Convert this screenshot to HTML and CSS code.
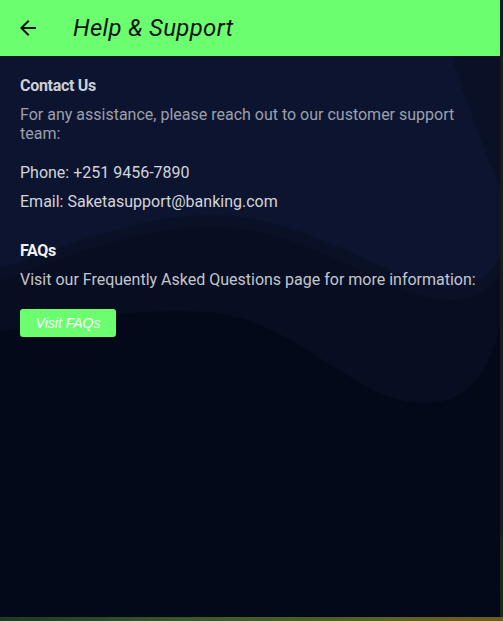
FILE: index.html
```html
<!DOCTYPE html>
<html lang="en">
<head>
<meta charset="utf-8">
<title>Help &amp; Support</title>
<link rel="stylesheet" href="styles.css">
</head>
<body>
<div class="frame">
  <div class="app">
    <header class="appbar">
      <button class="back" aria-label="Back">
        <svg width="24" height="24" viewBox="0 0 24 24"><path d="M20 11H7.83l5.59-5.59L12 4l-8 8 8 8 1.41-1.41L7.83 13H20v-2z" fill="#111"/></svg>
      </button>
      <h1 class="title">Help &amp; Support</h1>
    </header>
    <main class="body">
      <svg class="waves" viewBox="0 0 500 561" preserveAspectRatio="none" aria-hidden="true">
        <rect width="500" height="561" fill="#030918"/>
        <path d="M0,0 H500 V268 C490,320 462,352 415,347 C345,338 295,262 205,256 C120,252 60,266 0,276 Z" fill="#070e22"/>
        <path d="M0,0 H500 V214 C485,250 445,250 405,234 C345,210 300,180 235,172 C150,165 70,200 0,225 Z" fill="#0a1127"/>
        <path d="M0,0 H452 C466,45 484,95 500,132 V200 C482,236 445,236 405,220 C345,196 300,168 235,160 C150,152 70,190 0,212 Z" fill="#0d1430"/>
      </svg>
      <section class="block">
        <h2 class="heading">Contact Us</h2>
        <p class="muted">For any assistance, please reach out to our customer support team:</p>
        <p class="info spaced">Phone: +251 9456-7890</p>
        <p class="info">Email: Saketasupport@banking.com</p>
      </section>
      <section class="block">
        <h2 class="heading bright">FAQs</h2>
        <p class="info soft">Visit our Frequently Asked Questions page for more information:</p>
        <div class="actions"><button class="faq-btn">Visit FAQs</button></div>
      </section>
    </main>
  </div>
  <div class="edge"></div>
</div>
<div class="ground"></div>
</body>
</html>
```
FILE: styles.css
```css
html, body {
  margin: 0;
  padding: 0;
  background: #151515;
  overflow: hidden;
}
body {
  width: 503px;
  height: 621px;
  font-family: Roboto, "Noto Sans", sans-serif;
}
.frame {
  display: flex;
  height: 617px;
}
.app {
  width: 500px;
  height: 617px;
  display: flex;
  flex-direction: column;
  background: #030918;
}
.edge {
  width: 3px;
  background: linear-gradient(to bottom, #1b1b1b 0%, #1b1b1b 85%, #202a1c 90%, #1a2a18 100%);
}
.ground {
  height: 4px;
  background: linear-gradient(to right, #1d3a24 0%, #2c4a2a 20%, #3e5a2a 40%, #4a5d26 60%, #5a6125 75%, #6b5e22 90%, #6e5b20 100%);
}
.appbar {
  height: 56px;
  flex: none;
  display: flex;
  align-items: center;
  background: #6bff70;
}
.back {
  width: 56px;
  height: 56px;
  padding: 0;
  border: 0;
  background: transparent;
  display: flex;
  align-items: center;
  justify-content: center;
  cursor: pointer;
}
.back svg { display: block; }
.title {
  margin: 0 0 0 17px;
  font-size: 24px;
  font-weight: 400;
  font-style: italic;
  color: #111;
  letter-spacing: 0.3px;
}
.body {
  position: relative;
  flex: 1;
  padding: 20px 20px 0;
  display: flex;
  flex-direction: column;
  gap: 30px;
  overflow: hidden;
}
.waves {
  position: absolute;
  left: 0;
  top: 0;
  width: 100%;
  height: 100%;
  z-index: 0;
}
.block {
  position: relative;
  z-index: 1;
  display: flex;
  flex-direction: column;
  gap: 10px;
}
.heading {
  margin: 0;
  font-size: 16px;
  line-height: 19px;
  font-weight: 700;
  color: #cdcfd6;
  letter-spacing: -0.3px;
}
.heading.bright { color: #f2f3f6; }
.muted, .info {
  margin: 0;
  font-size: 16px;
  line-height: 19px;
}
.muted { color: #9ca0ac; }
.info { color: #d2d4da; }
.info.soft { color: #c3c6cd; }
.spaced { margin-top: 10px; }
.actions {
  margin-top: 10px;
  display: flex;
}
.faq-btn {
  width: 96px;
  height: 28px;
  border: 0;
  border-radius: 3px;
  background: #6bff70;
  color: #ffffff;
  font-family: "Liberation Sans", Arial, sans-serif;
  font-style: italic;
  font-size: 14px;
  padding: 0;
  cursor: pointer;
}
```
